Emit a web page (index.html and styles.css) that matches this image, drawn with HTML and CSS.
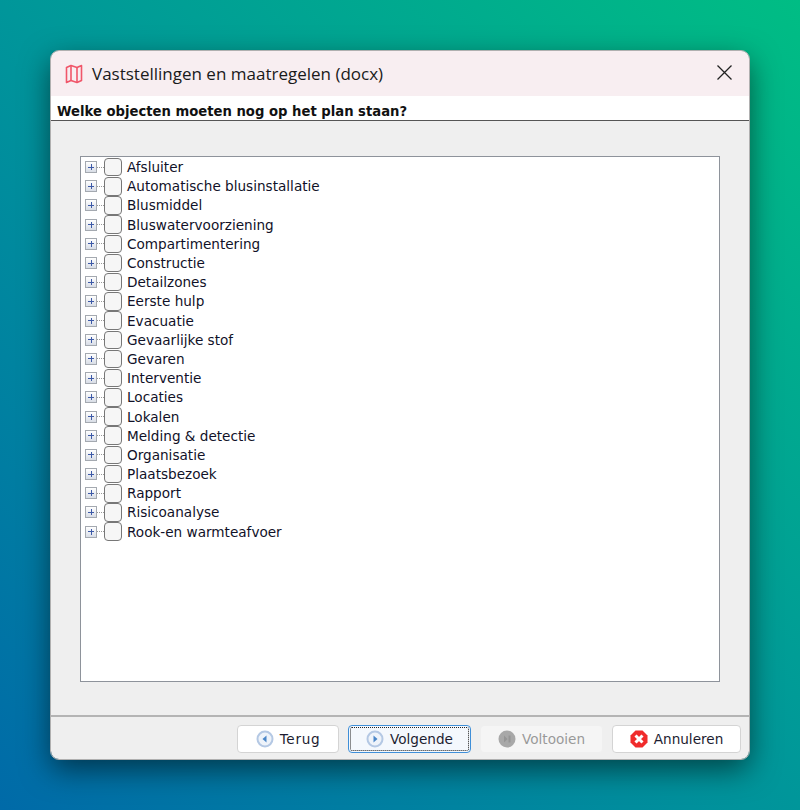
FILE: index.html
```html
<!DOCTYPE html>
<html lang="en">
<head>
    <meta charset="UTF-8">
    <meta name="viewport" content="width=device-width, initial-scale=1.0">
    <title>Vaststellingen en maatregelen (docx)</title>
    <link rel="stylesheet" href="styles.css">
</head>
<body>
    <div class="window">
        <div class="titlebar">
            <svg class="map-icon" width="18" height="20" viewBox="0 0 18 20" fill="none" stroke="#f0566a" stroke-width="1.6" stroke-linejoin="round">
                <path d="M1.5 3.5 L6 1.5 L12 3.5 L16.5 1.5 L16.5 16.5 L12 18.5 L6 16.5 L1.5 18.5 Z"/>
                <path d="M6 1.5 V16.5 M12 3.5 V18.5"/>
            </svg>
            <span class="title">Vaststellingen en maatregelen (docx)</span>
            <svg class="close-icon" width="15" height="15" viewBox="0 0 15 15" fill="none" stroke="#222" stroke-width="1.3">
                <path d="M.5 .5 L14.5 14.5 M14.5 .5 L.5 14.5"/>
            </svg>
        </div>
        <div class="question">Welke objecten moeten nog op het plan staan?</div>
        <div class="content">
            <ul class="tree">
                <li><span class="plus"></span><span class="dots"></span><span class="check"></span>Afsluiter</li>
                <li><span class="plus"></span><span class="dots"></span><span class="check"></span>Automatische blusinstallatie</li>
                <li><span class="plus"></span><span class="dots"></span><span class="check"></span>Blusmiddel</li>
                <li><span class="plus"></span><span class="dots"></span><span class="check"></span>Bluswatervoorziening</li>
                <li><span class="plus"></span><span class="dots"></span><span class="check"></span>Compartimentering</li>
                <li><span class="plus"></span><span class="dots"></span><span class="check"></span>Constructie</li>
                <li><span class="plus"></span><span class="dots"></span><span class="check"></span>Detailzones</li>
                <li><span class="plus"></span><span class="dots"></span><span class="check"></span>Eerste hulp</li>
                <li><span class="plus"></span><span class="dots"></span><span class="check"></span>Evacuatie</li>
                <li><span class="plus"></span><span class="dots"></span><span class="check"></span>Gevaarlijke stof</li>
                <li><span class="plus"></span><span class="dots"></span><span class="check"></span>Gevaren</li>
                <li><span class="plus"></span><span class="dots"></span><span class="check"></span>Interventie</li>
                <li><span class="plus"></span><span class="dots"></span><span class="check"></span>Locaties</li>
                <li><span class="plus"></span><span class="dots"></span><span class="check"></span>Lokalen</li>
                <li><span class="plus"></span><span class="dots"></span><span class="check"></span>Melding &amp; detectie</li>
                <li><span class="plus"></span><span class="dots"></span><span class="check"></span>Organisatie</li>
                <li><span class="plus"></span><span class="dots"></span><span class="check"></span>Plaatsbezoek</li>
                <li><span class="plus"></span><span class="dots"></span><span class="check"></span>Rapport</li>
                <li><span class="plus"></span><span class="dots"></span><span class="check"></span>Risicoanalyse</li>
                <li><span class="plus"></span><span class="dots"></span><span class="check"></span>Rook-en warmteafvoer</li>
            </ul>
        </div>
        <div class="footer">
            <button class="btn btn-back">
                <svg width="18" height="18" viewBox="0 0 18 18"><circle cx="9" cy="9" r="7.5" fill="#eef3fa" stroke="#b4c8e4" stroke-width="2"/><path d="M10.5 5.5 L6.5 9 L10.5 12.5 Z" fill="#4a86c8"/></svg>
                Terug
            </button>
            <button class="btn btn-next">
                <svg width="18" height="18" viewBox="0 0 18 18"><circle cx="9" cy="9" r="7.5" fill="#eef3fa" stroke="#b4c8e4" stroke-width="2"/><path d="M7.5 5.5 L11.5 9 L7.5 12.5 Z" fill="#4a86c8"/></svg>
                Volgende
            </button>
            <button class="btn btn-finish" disabled>
                <svg width="18" height="18" viewBox="0 0 18 18"><circle cx="9" cy="9" r="8.5" fill="#a8a8a8"/><path d="M6 5.5 L9.5 9 L6 12.5 Z M10.5 5.5 H12.5 V12.5 H10.5 Z" fill="#959595"/></svg>
                Voltooien
            </button>
            <button class="btn btn-cancel">
                <svg width="18" height="18" viewBox="0 0 18 18"><path d="M5.5 .5 H12.5 L17.5 5.5 V12.5 L12.5 17.5 H5.5 L.5 12.5 V5.5 Z" fill="#f02b2b"/><path d="M5.5 5.5 L12.5 12.5 M12.5 5.5 L5.5 12.5" stroke="#fff" stroke-width="3"/></svg>
                Annuleren
            </button>
        </div>
    </div>
</body>
</html>
```

FILE: styles.css
```css
html, body {
    height: 100%;
}

body {
    margin: 0;
    padding: 51px;
    box-sizing: border-box;
    height: 810px;
    overflow: hidden;
    font-family: "DejaVu Sans", sans-serif;
    background: linear-gradient(225deg, #00bd84 0%, #00969a 50%, #006aa8 100%);
}

.window {
    width: 698px;
    height: 708px;
    display: flex;
    flex-direction: column;
    background-color: #efefef;
    border-radius: 8px;
    overflow: hidden;
    box-shadow: 0 10px 30px rgba(0, 0, 0, 0.55);
    outline: 1px solid #b0b0b0;
}

.titlebar {
    height: 45px;
    flex: none;
    display: flex;
    align-items: center;
    padding: 0 17px 0 14px;
    background-color: #f8eef1;
}

.map-icon {
    margin-right: 9px;
}

.title {
    flex: 1;
    font-family: "Open Sans", sans-serif;
    font-size: 17px;
    color: #1a1a1a;
}

.close-icon {
    margin-bottom: 2px;
}

.question {
    height: 25px;
    flex: none;
    box-sizing: border-box;
    padding: 7px 0 0 6px;
    background-color: #fff;
    border-bottom: 1px solid #555;
    font-size: 13.2px;
    line-height: 17px;
    font-weight: bold;
    color: #111;
}

.content {
    flex: 1;
    padding: 35px 29px 33px;
    display: flex;
}

.tree {
    flex: 1;
    list-style: none;
    margin: 0;
    padding: 0.5px 0 0 4px;
    background-color: #fff;
    border: 1px solid #8e939b;
}

.tree li {
    height: 19.2px;
    display: flex;
    align-items: center;
    font-size: 13.6px;
    color: #111128;
}

.plus {
    width: 10px;
    height: 10px;
    flex: none;
    border: 1px solid #a4a9b0;
    background:
        linear-gradient(#3d5aa8, #3d5aa8) center / 6px 1px no-repeat,
        linear-gradient(#3d5aa8, #3d5aa8) center / 1px 6px no-repeat,
        linear-gradient(#fff, #d8dde6);
}

.dots {
    width: 7px;
    flex: none;
    border-top: 1px dotted #999;
}

.check {
    width: 16px;
    height: 16.5px;
    flex: none;
    margin-right: 5px;
    border: 1.5px solid #777;
    border-radius: 4px;
    background-color: #f6f6f6;
}

.footer {
    height: 44px;
    flex: none;
    box-sizing: border-box;
    padding: 8px 8px 0 0;
    display: flex;
    justify-content: flex-end;
    gap: 9px;
    border-top: 2px solid #b4b4b4;
}

.btn {
    height: 28px;
    display: flex;
    align-items: center;
    justify-content: center;
    gap: 6px;
    padding: 0;
    border: 1px solid #d4d4d4;
    border-radius: 4px;
    background-color: #fff;
    font-family: "DejaVu Sans", sans-serif;
    font-size: 13.6px;
    color: #1c1c30;
}

.btn-back {
    width: 102px;
    letter-spacing: 0.7px;
}

.btn-next {
    width: 123px;
    background-color: #f4f8fd;
    border: 1px solid #3f8fd8;
    outline: 1px dotted #222;
    outline-offset: -3px;
}

.btn-finish {
    width: 123px;
    background-color: #f5f5f5;
    border-color: #efefef;
    color: #999;
}

.btn-cancel {
    width: 129px;
}
```
